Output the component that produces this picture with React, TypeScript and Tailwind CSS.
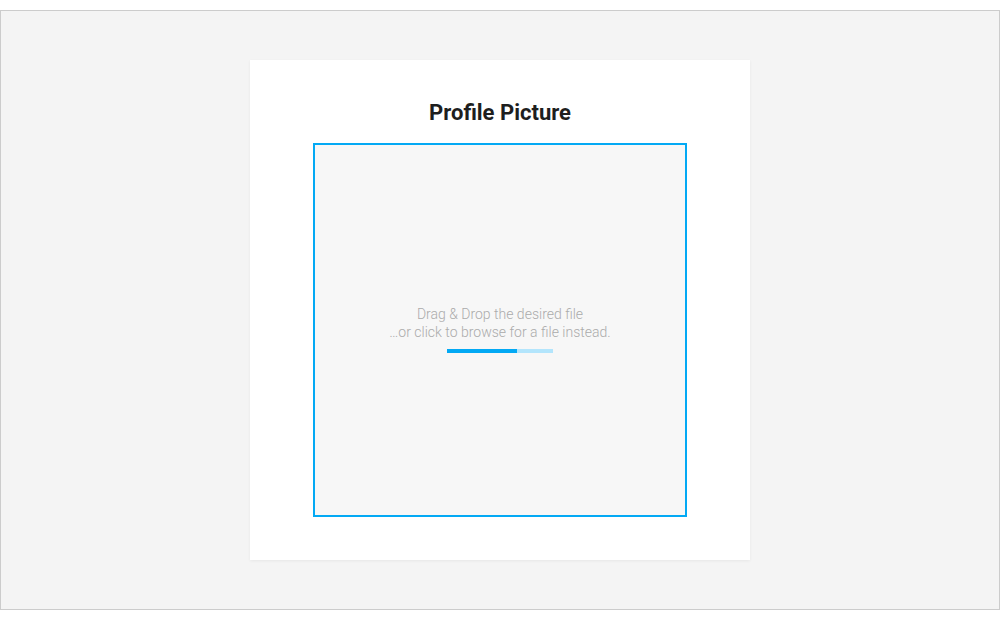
export default function App() {
  const progress = 66;

  return (
    <div className="w-[1000px] h-[620px] bg-white pt-[10px]" style={{ fontFamily: "Roboto, 'Noto Sans', sans-serif" }}>
      <div className="box-border h-[600px] w-[1000px] border border-[#cccccc] bg-[#f4f4f4] flex items-center justify-center">
        <div className="w-[500px] h-[500px] bg-white shadow-[0_1px_3px_rgba(0,0,0,0.06)] flex flex-col items-center pt-[39px]">
          <h1 className="text-[22px] leading-[28px] font-bold text-[#1e1e1e]">Profile Picture</h1>

          {/* Drop zone */}
          <div className="mt-[16px] box-border w-[374px] h-[374px] border-2 border-[#03a9f4] bg-[#f7f7f7] flex flex-col items-center justify-center pb-[3px] cursor-pointer">
            <p className="text-[14px] leading-[18px] font-light text-[#ababab] text-center">
              Drag &amp; Drop the desired file
              <br />
              …or click to browse for a file instead.
            </p>
            <div className="mt-[8px] w-[106px] h-[4px] bg-[#b3e5fc]">
              <div className="h-full bg-[#03a9f4]" style={{ width: `${progress}%` }} />
            </div>
          </div>
        </div>
      </div>
    </div>
  );
}
